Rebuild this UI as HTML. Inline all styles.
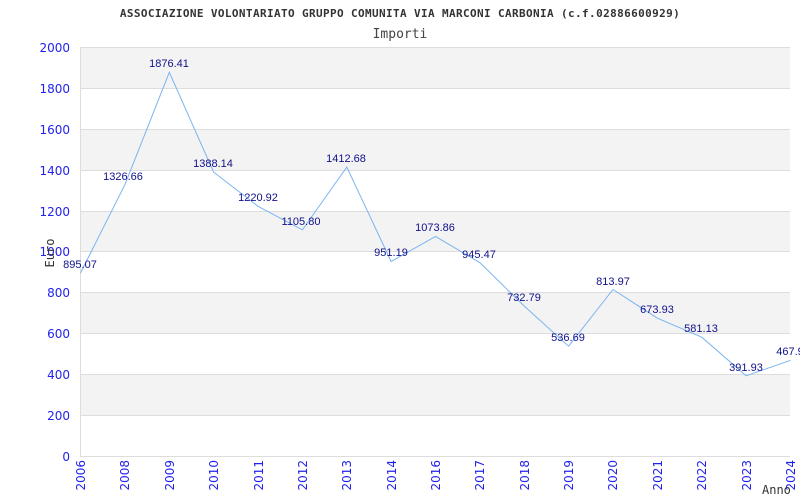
<!DOCTYPE html>
<html><head><meta charset="utf-8"><style>
html,body{margin:0;padding:0;background:#fff;width:800px;height:500px;overflow:hidden}
</style></head><body>
<svg width="800" height="500" xmlns="http://www.w3.org/2000/svg">
<text x="400" y="17" text-anchor="middle" font-family="DejaVu Sans Mono, Liberation Mono, monospace" font-weight="bold" font-size="11" letter-spacing="0.38" fill="#333">ASSOCIAZIONE VOLONTARIATO GRUPPO COMUNITA VIA MARCONI CARBONIA (c.f.02886600929)</text>
<text x="400" y="38" text-anchor="middle" font-family="DejaVu Sans Mono, Liberation Mono, monospace" font-size="13" fill="#444">Importi</text>
<g fill="#f3f3f3">
<rect x="80" y="47" width="710" height="41"/>
<rect x="80" y="129" width="710" height="41"/>
<rect x="80" y="211" width="710" height="41"/>
<rect x="80" y="292" width="710" height="41"/>
<rect x="80" y="374" width="710" height="41"/>
</g>
<g stroke="#dddddd" stroke-width="1">
<line x1="80" x2="790" y1="47.5" y2="47.5"/>
<line x1="80" x2="790" y1="88.5" y2="88.5"/>
<line x1="80" x2="790" y1="129.5" y2="129.5"/>
<line x1="80" x2="790" y1="170.5" y2="170.5"/>
<line x1="80" x2="790" y1="211.5" y2="211.5"/>
<line x1="80" x2="790" y1="251.5" y2="251.5"/>
<line x1="80" x2="790" y1="292.5" y2="292.5"/>
<line x1="80" x2="790" y1="333.5" y2="333.5"/>
<line x1="80" x2="790" y1="374.5" y2="374.5"/>
<line x1="80" x2="790" y1="415.5" y2="415.5"/>
<line x1="80" x2="790" y1="456.5" y2="456.5"/>
<line x1="80.5" x2="80.5" y1="47" y2="456"/>
</g>
<g font-family="DejaVu Sans, sans-serif" font-size="12" fill="#2222ee" text-anchor="end">
<text x="70" y="52">2000</text><text x="70" y="93">1800</text><text x="70" y="134">1600</text>
<text x="70" y="175">1400</text><text x="70" y="216">1200</text><text x="70" y="256">1000</text>
<text x="70" y="297">800</text><text x="70" y="338">600</text><text x="70" y="379">400</text>
<text x="70" y="420">200</text><text x="70" y="461">0</text>
</g>
<g font-family="DejaVu Sans, sans-serif" font-size="12" fill="#2222ee" text-anchor="end">
<text transform="translate(85,460) rotate(-90)">2006</text>
<text transform="translate(129,460) rotate(-90)">2008</text>
<text transform="translate(174,460) rotate(-90)">2009</text>
<text transform="translate(218,460) rotate(-90)">2010</text>
<text transform="translate(263,460) rotate(-90)">2011</text>
<text transform="translate(307,460) rotate(-90)">2012</text>
<text transform="translate(351,460) rotate(-90)">2013</text>
<text transform="translate(396,460) rotate(-90)">2014</text>
<text transform="translate(440,460) rotate(-90)">2016</text>
<text transform="translate(484,460) rotate(-90)">2017</text>
<text transform="translate(529,460) rotate(-90)">2018</text>
<text transform="translate(573,460) rotate(-90)">2019</text>
<text transform="translate(617,460) rotate(-90)">2020</text>
<text transform="translate(662,460) rotate(-90)">2021</text>
<text transform="translate(706,460) rotate(-90)">2022</text>
<text transform="translate(751,460) rotate(-90)">2023</text>
<text transform="translate(795,460) rotate(-90)">2024</text>
</g>
<text transform="translate(54,253) rotate(-90)" text-anchor="middle" font-family="DejaVu Sans Mono, monospace" font-size="12" fill="#333">Euro</text>
<text x="762" y="494" font-family="DejaVu Sans Mono, monospace" font-size="12" fill="#333">Anno</text>
<polyline fill="none" stroke="#7ab4f0" stroke-width="1" points="80.5,273 124.9,184.7 169.3,72.3 213.6,172.1 258,206.3 302.4,229.9 346.8,167.1 391.1,261.5 435.5,236.4 479.9,262.7 524.3,306.1 568.6,346.2 613,289.5 657.4,318.2 701.8,337.2 746.1,375.8 790.5,360.3"/>
<g font-family="Liberation Sans, Arial, sans-serif" font-size="11" fill="#10108a" text-anchor="middle">
<text x="80" y="268">895.07</text>
<text x="123" y="180">1326.66</text>
<text x="169" y="67">1876.41</text>
<text x="213" y="167">1388.14</text>
<text x="258" y="201">1220.92</text>
<text x="301" y="225">1105.80</text>
<text x="346" y="162">1412.68</text>
<text x="391" y="256">951.19</text>
<text x="435" y="231">1073.86</text>
<text x="479" y="258">945.47</text>
<text x="524" y="301">732.79</text>
<text x="568" y="341">536.69</text>
<text x="613" y="285">813.97</text>
<text x="657" y="313">673.93</text>
<text x="701" y="332">581.13</text>
<text x="746" y="371">391.93</text>
<text x="790" y="355">467.9</text>
</g>
</svg>
</body></html>
